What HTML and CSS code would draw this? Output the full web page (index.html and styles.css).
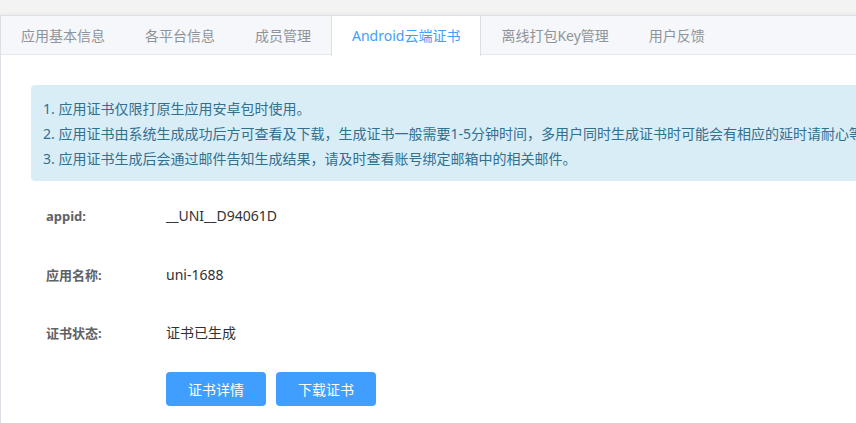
FILE: index.html
```html
<!DOCTYPE html>
<html lang="zh-CN">
<head>
    <meta charset="UTF-8">
    <meta name="viewport" content="width=device-width, initial-scale=1.0">
    <title>Android云端证书</title>
    <link rel="stylesheet" href="styles.css">
</head>
<body>

    <div class="card">
        <div class="tabs">
            <div class="tab">应用基本信息</div>
            <div class="tab">各平台信息</div>
            <div class="tab">成员管理</div>
            <div class="tab active">Android云端证书</div>
            <div class="tab">离线打包Key管理</div>
            <div class="tab">用户反馈</div>
        </div>

        <div class="content">
            <div class="alert">
                <p>1. 应用证书仅限打原生应用安卓包时使用。</p>
                <p>2. 应用证书由系统生成成功后方可查看及下载，生成证书一般需要1-5分钟时间，多用户同时生成证书时可能会有相应的延时请耐心等待。</p>
                <p>3. 应用证书生成后会通过邮件告知生成结果，请及时查看账号绑定邮箱中的相关邮件。</p>
            </div>

            <div class="form">
                <div class="row">
                    <span class="label">appid:</span>
                    <span class="value">__UNI__D94061D</span>
                </div>
                <div class="row">
                    <span class="label">应用名称:</span>
                    <span class="value">uni-1688</span>
                </div>
                <div class="row">
                    <span class="label">证书状态:</span>
                    <span class="value">证书已生成</span>
                </div>
                <div class="actions">
                    <button type="button">证书详情</button>
                    <button type="button">下载证书</button>
                </div>
            </div>
        </div>
    </div>

</body>
</html>
```

FILE: styles.css
```css
body {
    margin: 0;
    padding-top: 15px;
    background-color: #f3f3f3;
    font-family: "Noto Sans", "Noto Sans CJK SC", sans-serif;
    overflow: hidden;
}
.card {
    width: 1200px;
    height: 420px;
    background: white;
    border: 1px solid #dcdfe6;
    box-shadow: 0 2px 4px 0 rgba(0, 0, 0, 0.12), 0 0 6px 0 rgba(0, 0, 0, 0.04);
}
.tabs {
    display: flex;
    height: 38px;
    background-color: #f5f7fa;
    border-bottom: 1px solid #e4e7ed;
}
.tab {
    padding: 0 20px;
    height: 39px;
    line-height: 40px;
    font-size: 14px;
    color: #909399;
}
.tab.active {
    background: white;
    color: #409eff;
    border-left: 1px solid #dcdfe6;
    border-right: 1px solid #dcdfe6;
    height: 40px;
}
.content {
    padding: 30px 0 0 30px;
}
.alert {
    background-color: #d9edf7;
    color: #31708f;
    border-radius: 4px;
    padding: 11px 12px 10px;
    font-size: 14px;
    white-space: nowrap;
}
.alert p {
    margin: 0;
    line-height: 25px;
}
.form {
    margin: 15px 0 0 15px;
}
.row {
    display: flex;
    height: 40px;
    line-height: 40px;
    margin-bottom: 18.5px;
}
.label {
    width: 120px;
    font-size: 13px;
    font-weight: bold;
    color: #606266;
}
.value {
    font-size: 14px;
    color: #303133;
}
.actions {
    display: flex;
    gap: 10px;
    margin-left: 120px;
}
button {
    width: 100px;
    height: 34px;
    border: none;
    border-radius: 4px;
    background-color: #409eff;
    color: white;
    font-size: 14px;
    font-family: inherit;
}
```
